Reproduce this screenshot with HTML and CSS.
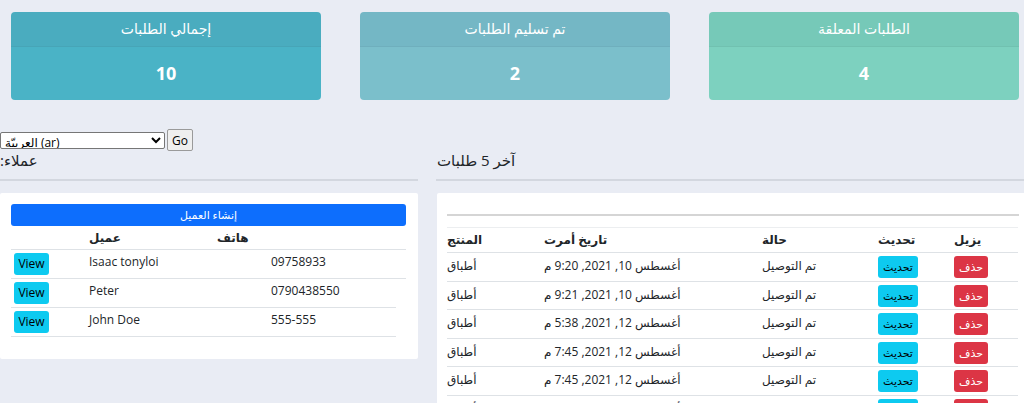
FILE: index.html
```html
<!DOCTYPE html>
<html lang="ar">
<head>
<meta charset="utf-8">
<title>لوحة التحكم</title>
<link rel="stylesheet" href="styles.css">
</head>
<body>
<div class="stats">
  <div class="stat stat-total">
    <div class="stat-head">إجمالي الطلبات</div>
    <div class="stat-body">10</div>
  </div>
  <div class="stat stat-delivered">
    <div class="stat-head">تم تسليم الطلبات</div>
    <div class="stat-body">2</div>
  </div>
  <div class="stat stat-pending">
    <div class="stat-head">الطلبات المعلقة</div>
    <div class="stat-body">4</div>
  </div>
</div>

<form class="lang">
  <select class="lang-select"><option>العربيّة (ar)</option><option>English (en)</option></select>
  <button type="button" class="lang-go">Go</button>
</form>

<div class="main">
  <section class="col-left">
    <h5 class="section-title">:عملاء</h5>
    <hr class="section-rule">
    <div class="panel panel-left">
      <a class="btn-create">إنشاء العميل</a>
      <table class="tbl customers">
        <colgroup><col class="c1"><col class="c2"><col class="c3"><col class="c4"><col class="c5"></colgroup>
        <thead>
          <tr><th></th><th>عميل</th><th>هاتف</th><th></th><th></th></tr>
        </thead>
        <tbody>
          <tr><td><a class="btn-view">View</a></td><td>Isaac tonyloi</td><td></td><td>09758933</td><td></td></tr>
          <tr><td><a class="btn-view">View</a></td><td>Peter</td><td></td><td>0790438550</td></tr>
          <tr><td><a class="btn-view">View</a></td><td>John Doe</td><td></td><td>555-555</td></tr>
        </tbody>
      </table>
    </div>
  </section>

  <section class="col-right">
    <h5 class="section-title">آخر 5 طلبات</h5>
    <hr class="section-rule section-rule-right">
    <div class="panel panel-right">
      <hr class="inner-rule">
      <table class="tbl orders">
        <colgroup><col class="o1"><col class="o2"><col class="o3"><col class="o4"><col class="o5"></colgroup>
        <thead>
          <tr><th>المنتج</th><th>تاريخ أمرت</th><th>حالة</th><th>تحديث</th><th>يزيل</th></tr>
        </thead>
        <tbody>
          <tr><td>أطباق</td><td>أغسطس 10, 2021, 9:20 م</td><td>تم التوصيل</td><td><a class="btn-update">تحديث</a></td><td><a class="btn-delete">حذف</a></td></tr>
          <tr><td>أطباق</td><td>أغسطس 10, 2021, 9:21 م</td><td>تم التوصيل</td><td><a class="btn-update">تحديث</a></td><td><a class="btn-delete">حذف</a></td></tr>
          <tr><td>أطباق</td><td>أغسطس 12, 2021, 5:38 م</td><td>تم التوصيل</td><td><a class="btn-update">تحديث</a></td><td><a class="btn-delete">حذف</a></td></tr>
          <tr><td>أطباق</td><td>أغسطس 12, 2021, 7:45 م</td><td>تم التوصيل</td><td><a class="btn-update">تحديث</a></td><td><a class="btn-delete">حذف</a></td></tr>
          <tr><td>أطباق</td><td>أغسطس 12, 2021, 7:45 م</td><td>تم التوصيل</td><td><a class="btn-update">تحديث</a></td><td><a class="btn-delete">حذف</a></td></tr>
          <tr><td>أطباق</td><td>أغسطس 12, 2021, 7:45 م</td><td>تم التوصيل</td><td><a class="btn-update">تحديث</a></td><td><a class="btn-delete">حذف</a></td></tr>
        </tbody>
      </table>
    </div>
  </section>
</div>
</body>
</html>
```

FILE: styles.css
```css
html, body {
  margin: 0;
  padding: 0;
}
body {
  width: 1024px;
  height: 403px;
  overflow: hidden;
  background: #e9ecf4;
  font-family: "Open Sans", "DejaVu Sans", sans-serif;
  font-size: 12px;
  color: #212529;
}

/* stat cards */
.stats {
  display: grid;
  grid-template-columns: repeat(3, 310px);
  column-gap: 39px;
  padding: 12px 0 0 11px;
}
.stat {
  border-radius: 4px;
  overflow: hidden;
  color: #fff;
  text-align: center;
}
.stat-head {
  height: 34px;
  line-height: 34px;
  font-size: 14px;
  border-bottom: 1px solid rgba(0, 0, 0, 0.04);
}
.stat-body {
  height: 53px;
  line-height: 53px;
  font-size: 18px;
  font-weight: 700;
}
.stat-total .stat-head { background: #4aacbf; }
.stat-total .stat-body { background: #4ab3c6; }
.stat-delivered .stat-head { background: #74b7c5; }
.stat-delivered .stat-body { background: #7bbfcb; }
.stat-pending .stat-head { background: #76c9b8; }
.stat-pending .stat-body { background: #7dd1bf; }

/* language form */
.lang {
  display: flex;
  align-items: center;
  margin: 29px 0 0 0;
  height: 22px;
}
.lang-select {
  width: 165px;
  height: 17px;
  font-family: "Open Sans", "DejaVu Sans", sans-serif;
  font-size: 12px;
  padding: 0;
  border: 1px solid #767676;
  border-radius: 2px;
  background: #fff;
  color: #000;
}
.lang-go {
  margin-left: 2px;
  width: 26px;
  height: 22px;
  padding: 0;
  font-family: "Open Sans", sans-serif;
  font-size: 12px;
  background: #efefef;
  border: 1px solid #9a9a9a;
  border-radius: 2px;
  color: #000;
}

/* main columns */
.main {
  display: grid;
  grid-template-columns: 418px 593px;
  column-gap: 18px;
}
.section-title {
  margin: 0;
  font-size: 15px;
  font-weight: 400;
  line-height: 18px;
  color: #212529;
}
.col-right .section-title {
  padding-left: 1px;
}
.section-rule {
  margin: 10px 0 12px 0;
  height: 2px;
  border: 0;
  background: #d3d7df;
}
.panel {
  background: #fff;
  border-radius: 2px;
}
.panel-left {
  padding: 11px 12px 22px 11px;
}
.panel-right {
  margin-left: 1px;
  padding: 10px 10px 10px 10px;
  height: 300px;
}

.btn-create {
  display: block;
  height: 22px;
  line-height: 22px;
  background: #0d6efd;
  color: #fff;
  text-align: center;
  font-size: 11px;
  border-radius: 3px;
}

.tbl {
  border-collapse: collapse;
  table-layout: fixed;
}
.tbl th {
  text-align: left;
  font-weight: 700;
}

/* customers */
.customers {
  width: 395px;
}
.customers .c1 { width: 74px; }
.customers .c2 { width: 128px; }
.customers .c3 { width: 54px; }
.customers .c4 { width: 129px; }
.customers .c5 { width: 10px; }
.customers th {
  padding: 5px 4px 4px 4px;
  line-height: 14px;
  height: 14px;
  border-bottom: 1px solid #dee2e6;
}
.customers td {
  padding: 3px 4px 3px 3px;
  line-height: 18px;
  vertical-align: top;
  border-bottom: 1px solid #dee2e6;
}
.customers td:nth-child(2),
.customers td:nth-child(4) {
  padding-left: 4px;
}
.btn-view {
  display: inline-block;
  width: 35px;
  height: 22px;
  line-height: 22px;
  text-align: center;
  background: #0dcaf0;
  color: #000;
  font-size: 12px;
  border-radius: 3px;
}

/* orders */
.inner-rule {
  margin: 11px 0 11px 0;
  height: 2px;
  border: 0;
  background: #d5d5d5;
}
.orders {
  width: 571px;
}
.orders .o1 { width: 97px; }
.orders .o2 { width: 218px; }
.orders .o3 { width: 116px; }
.orders .o4 { width: 76px; }
.orders .o5 { width: 64px; }
.orders th {
  padding: 5px 0;
  line-height: 14px;
  border-top: 1px solid #eceef0;
  border-bottom: 1px solid #dee2e6;
}
.orders td {
  padding: 3px 0 2.6px 0;
  line-height: 16px;
  vertical-align: top;
  border-bottom: 1px solid #dee2e6;
}
.orders td:nth-child(1),
.orders td:nth-child(2),
.orders td:nth-child(3) {
  padding-top: 5px;
}
.btn-update,
.btn-delete {
  display: inline-block;
  height: 22px;
  line-height: 22px;
  text-align: center;
  font-size: 11px;
  border-radius: 3px;
}
.btn-update {
  width: 40px;
  background: #0dcaf0;
  color: #000;
}
.btn-delete {
  width: 34px;
  background: #dc3545;
  color: #fff;
}
```
